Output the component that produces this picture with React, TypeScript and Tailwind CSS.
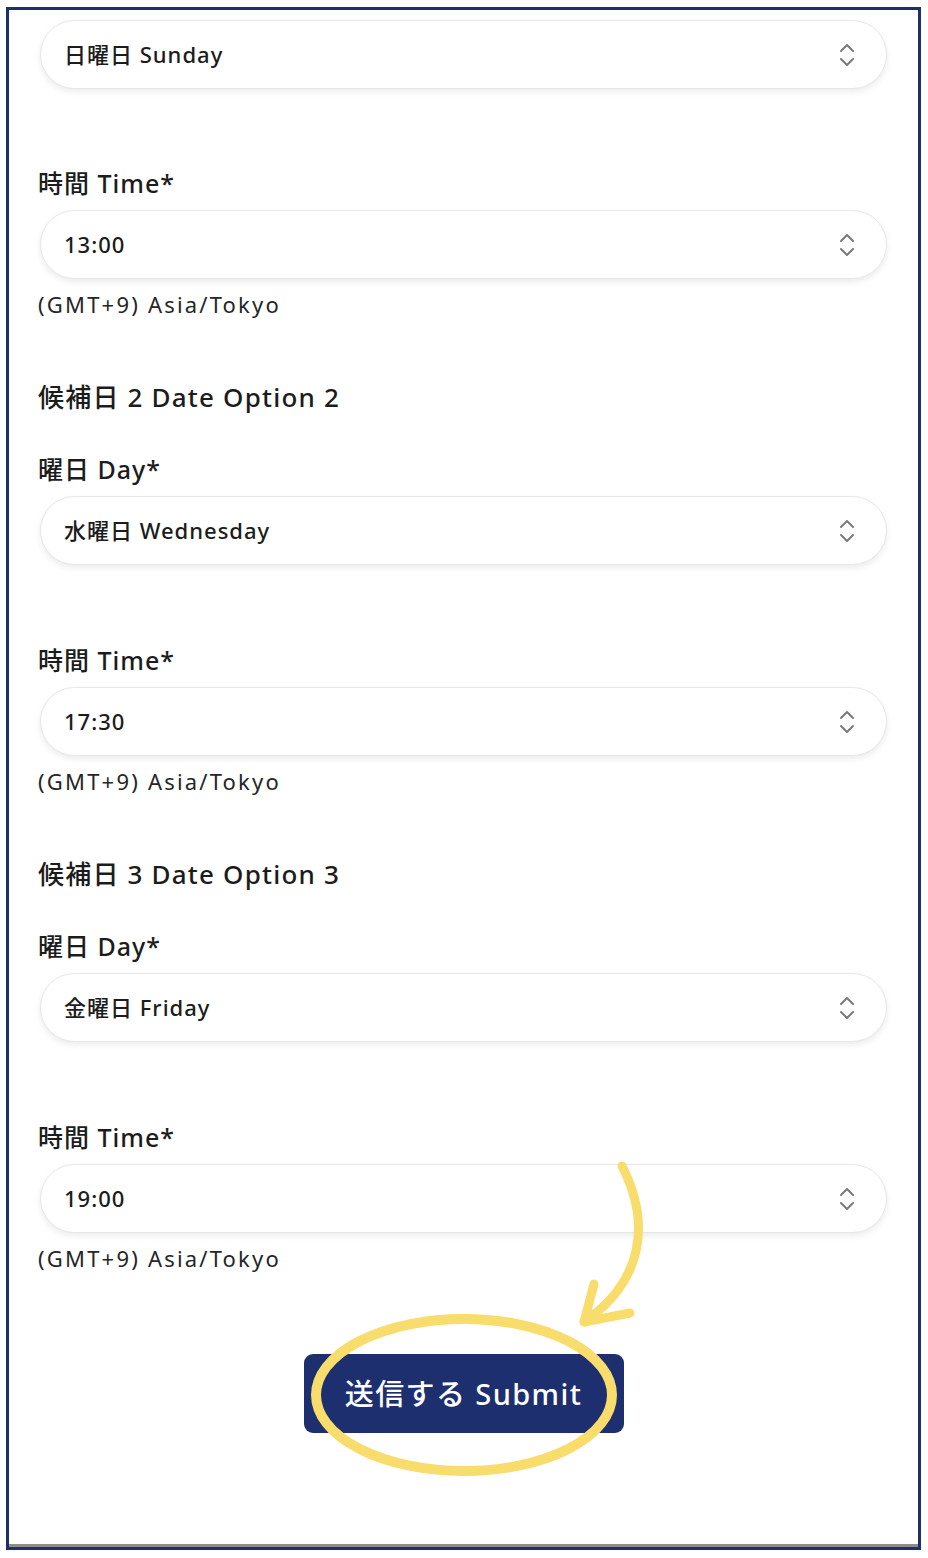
import React from 'react';

const FONT = '"Noto Sans", "Noto Sans CJK JP", sans-serif';

const Chevrons: React.FC = () => (
  <svg width="18" height="26" viewBox="0 0 18 26" fill="none" stroke="#7a7a7a" strokeWidth="2" strokeLinecap="round" strokeLinejoin="round">
    <path d="M3 9 L9 3 L15 9" />
    <path d="M3 17 L9 23 L15 17" />
  </svg>
);

const Select: React.FC<{ value: string; className?: string }> = ({ value, className = '' }) => (
  <div className={`h-[69px] rounded-full border border-[#e6e7eb] bg-white shadow-[0_3px_6px_rgba(0,0,0,0.08)] flex items-center justify-between pl-[23px] pr-[30px] ${className}`}>
    <span className="text-[22px] font-medium tracking-[1px] text-[#1c1c1c]">{value}</span>
    <Chevrons />
  </div>
);

const Label: React.FC<{ text: string; className?: string }> = ({ text, className = '' }) => (
  <div className={`-ml-[2px] text-[25px] leading-[32px] font-medium tracking-[1px] text-[#1c1c1c] ${className}`}>{text}</div>
);

const Zone: React.FC<{ className?: string }> = ({ className = '' }) => (
  <div className={`-ml-[2px] text-[22px] leading-[30px] tracking-[2.2px] text-[#262626] ${className}`}>(GMT+9) Asia/Tokyo</div>
);

const Heading: React.FC<{ text: string; className?: string }> = ({ text, className = '' }) => (
  <div className={`-ml-[2px] text-[26px] leading-[32px] font-medium tracking-[1.2px] text-[#1c1c1c] ${className}`}>{text}</div>
);

const DateOption: React.FC<{ n: number; day: string; time: string }> = ({ n, day, time }) => (
  <>
    <Heading text={`候補日 ${n} Date Option ${n}`} className="mt-[62px] whitespace-pre" />
    <Label text="曜日 Day*" className="mt-[40px]" />
    <Select value={day} className="mt-[11px]" />
    <Label text="時間 Time*" className="mt-[79px]" />
    <Select value={time} className="mt-[11px]" />
    <Zone className="mt-[10px]" />
  </>
);

export default function App() {
  return (
    <div className="relative w-[928px] h-[1558px] bg-white pt-[7px] pl-[6px]" style={{ fontFamily: FONT }}>
      <div className="w-[915px] h-[1543px] border-[3px] border-[#1f2f6e] bg-white overflow-hidden">
        <div className="h-full border-b-[3px] border-[#8d8d8d] px-[31px] pt-[10px] flex flex-col">
          <Select value="日曜日 Sunday" />
          <Label text="時間 Time*" className="mt-[78px]" />
          <Select value="13:00" className="mt-[11px]" />
          <Zone className="mt-[10px]" />

          <DateOption n={2} day="水曜日 Wednesday" time="17:30" />
          <DateOption n={3} day="金曜日 Friday" time="19:00" />

          <div className="mt-[81px] flex justify-center">
            <button className="w-[320px] h-[79px] rounded-[9px] bg-[#1e2f70] text-white text-[29px] font-medium tracking-[1.4px]">
              送信する Submit
            </button>
          </div>
        </div>
      </div>

      {/* hand-drawn highlight */}
      <svg className="absolute inset-0 pointer-events-none" width="928" height="1558" viewBox="0 0 928 1558" fill="none">
        <ellipse cx="464" cy="1395" rx="148" ry="76" stroke="#f8dc6c" strokeWidth="10" />
        <path d="M622 1166 C 652 1225, 642 1282, 584 1322" stroke="#f8dc6c" strokeWidth="9" strokeLinecap="round" />
        <path d="M594 1284 L 584 1322 L 630 1313" stroke="#f8dc6c" strokeWidth="9" strokeLinecap="round" strokeLinejoin="round" />
      </svg>
    </div>
  );
}
